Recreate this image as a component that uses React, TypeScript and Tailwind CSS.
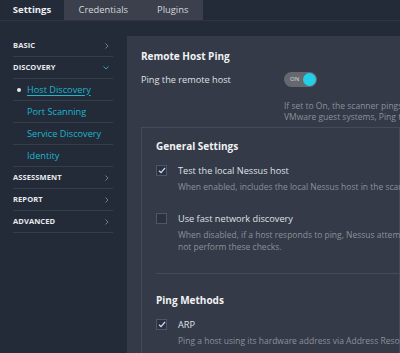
import React from 'react'

const font = { fontFamily: '"Open Sans", "Liberation Sans", sans-serif' }

const Chevron = ({ down = false }: { down?: boolean }) =>
	down ? (
		<svg width="6" height="4" viewBox="0 0 6 4" className="text-[#1fb5cc]">
			<path d="M0.5 0.5 L3 3 L5.5 0.5" fill="none" stroke="currentColor" strokeWidth="0.9" />
		</svg>
	) : (
		<svg width="4" height="6" viewBox="0 0 4 6" className="text-[#7d8492]">
			<path d="M0.5 0.5 L3 3 L0.5 5.5" fill="none" stroke="currentColor" strokeWidth="0.9" />
		</svg>
	)

const Group = ({ label, open = false }: { label: string; open?: boolean }) => (
	<div className="h-[22px] flex items-center justify-between pr-[4px] border-b border-[#353c4a]">
		<span className="text-[7.5px] font-bold tracking-[0.1px] text-[#e8eaee]">{label}</span>
		<Chevron down={open} />
	</div>
)

const SubItem = ({ label, active = false }: { label: string; active?: boolean }) => (
	<div className="h-[22px] flex items-center border-b border-[#353c4a] relative">
		{active && <span className="absolute left-[4px] w-[4px] h-[4px] rounded-full bg-[#e6e8ec]" />}
		<span
			className={
				'ml-[14px] text-[9.2px] text-[#1fb5cc] leading-[12px] ' +
				(active ? 'underline underline-offset-[2px] decoration-[1px]' : '')
			}
		>
			{label}
		</span>
	</div>
)

const Check = ({ checked }: { checked: boolean }) => (
	<div className="w-[11px] h-[11px] shrink-0 border border-[#4f5667] bg-[#2a3140] flex items-center justify-center">
		{checked && (
			<svg width="8" height="7" viewBox="0 0 8 7">
				<path d="M1 3.8 L3 5.6 L7 1" fill="none" stroke="#c9d6f5" strokeWidth="1.3" />
			</svg>
		)}
	</div>
)

const Option = ({ checked, label, desc }: { checked: boolean; label: string; desc: string[] }) => (
	<div>
		<div className="flex items-center gap-[11px]">
			<Check checked={checked} />
			<span className="text-[9.2px] leading-[11px] text-[#dfe1e6] whitespace-nowrap">{label}</span>
		</div>
		<div className="ml-[22px] mt-[5px] text-[8.5px] leading-[12px] text-[#8b909b] whitespace-nowrap">
			{desc.map((d) => (
				<div key={d}>{d}</div>
			))}
		</div>
	</div>
)

const App = () => {
	return (
		<div style={font} className="w-[400px] h-[353px] overflow-hidden bg-[#232a38] text-white flex flex-col">
			<nav className="h-[21px] shrink-0 flex border-b border-[#2d3544]">
				<div className="w-[64px] flex items-center justify-center text-[9.5px] font-bold text-[#eef0f3]">
					Settings
				</div>
				<div className="bg-[#3b404c] flex">
					<div className="px-[14.5px] flex items-center text-[9.4px] text-[#d4d7dd]">Credentials</div>
					<div className="px-[14.5px] flex items-center text-[9.4px] text-[#d4d7dd]">Plugins</div>
				</div>
			</nav>

			<div className="flex flex-1 min-h-0">
				<aside className="w-[127px] shrink-0 pt-[14px] pl-[13px] pr-[14px]">
					<Group label="BASIC" />
					<Group label="DISCOVERY" open />
					<SubItem label="Host Discovery" active />
					<SubItem label="Port Scanning" />
					<SubItem label="Service Discovery" />
					<SubItem label="Identity" />
					<Group label="ASSESSMENT" />
					<Group label="REPORT" />
					<Group label="ADVANCED" />
				</aside>

				<main className="flex-1 mt-[15px] bg-[#343a47] pl-[14px] pt-[13px] overflow-hidden">
					<h2 className="text-[10px] leading-[14px] font-bold text-[#f1f2f4]">Remote Host Ping</h2>
					<div className="flex items-center mt-[9px] h-[15px]">
						<span className="w-[143px] shrink-0 text-[9.2px] text-[#dfe1e6]">Ping the remote host</span>
						<div className="w-[33px] h-[15px] rounded-full bg-[#65686e] flex items-center justify-between pl-[6px] pr-[1px]">
							<span className="text-[6px] text-[#dcdcdc]">ON</span>
							<span className="w-[13px] h-[13px] rounded-full bg-[#22cfe6]" />
						</div>
					</div>
					<div className="ml-[143px] mt-[13px] text-[8.5px] leading-[11px] text-[#8b909b] whitespace-nowrap">
						<div>If set to On, the scanner pings remote hosts on multiple ports to determine if they are alive.</div>
						<div>VMware guest systems, Ping the remote host is recommended.</div>
					</div>

					<section className="mt-[5px] border border-[#454b5a] pl-[14px] pt-[11px] pb-[20px]">
						<h3 className="text-[10px] leading-[14px] font-bold text-[#f1f2f4]">General Settings</h3>
						<div className="mt-[12px]">
							<Option
								checked
								label="Test the local Nessus host"
								desc={['When enabled, includes the local Nessus host in the scan.']}
							/>
						</div>
						<div className="mt-[20px]">
							<Option
								checked={false}
								label="Use fast network discovery"
								desc={[
									'When disabled, if a host responds to ping, Nessus attempts to avoid false positives,',
									'not perform these checks.',
								]}
							/>
						</div>
						<div className="mt-[20px] border-t border-[#454b5a]" />
						<h3 className="mt-[19px] text-[10px] leading-[14px] font-bold text-[#f1f2f4]">Ping Methods</h3>
						<div className="mt-[12px]">
							<Option
								checked
								label="ARP"
								desc={['Ping a host using its hardware address via Address Resolution Protocol (ARP).']}
							/>
						</div>
					</section>
				</main>
			</div>
		</div>
	)
}

export default App
